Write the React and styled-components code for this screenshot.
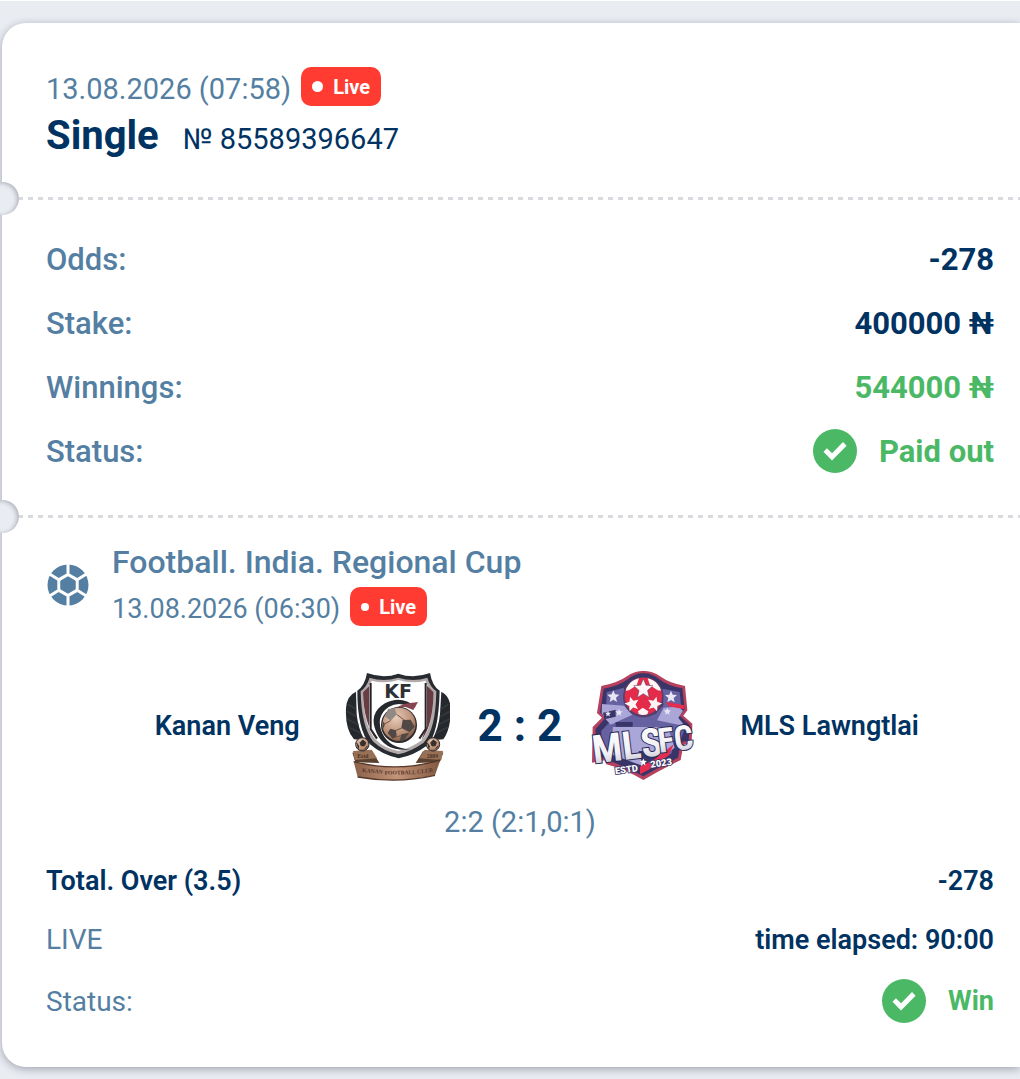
import React from "react";
import styled, { createGlobalStyle } from "styled-components";

const COLORS = {
  page: "#e9edf2",
  white: "#ffffff",
  navy: "#003262",
  blue: "#547fa2",
  green: "#4bb866",
  red: "#ff3b32",
  dash: "#d8dade",
};

const details = [
  { label: "Odds:", value: "-278" },
  { label: "Stake:", value: "400000 ₦" },
  { label: "Winnings:", value: "544000 ₦", green: true },
  { label: "Status:", value: "Paid out", green: true, check: true },
];

const CheckIcon = () => (
  <CheckSvg viewBox="0 0 44 44" aria-hidden="true">
    <circle cx="22" cy="22" r="22" fill={COLORS.green} />
    <path d="M10.5 22.8l3.4-3.5 5.2 5L30 13l3.6 3.7L19 31.4z" fill="#fff" />
  </CheckSvg>
);

const BallIcon = () => (
  <BallSvg viewBox="0 0 42 42" aria-hidden="true">
    <circle cx="21" cy="21" r="20.5" fill={COLORS.blue} />
    <path d="M21 12.8l7.2 4.1v8.2L21 29.2l-7.2-4.1v-8.2z" fill="none" stroke="#fff" strokeWidth="7" />
    <path d="M21 12.8l7.2 4.1v8.2L21 29.2l-7.2-4.1v-8.2z" fill={COLORS.blue} />
    <path d="M21 12.8l7.2 4.1v8.2L21 29.2l-7.2-4.1v-8.2z" fill="none" stroke={COLORS.blue} strokeWidth="1" />
    <path
      d="M21 0v9.5M21 32.5V42M31 15.2l8-4.9M31 26.8l8 4.9M11 15.2l-8-4.9M11 26.8l-8 4.9"
      fill="none"
      stroke="#fff"
      strokeWidth="3"
    />
  </BallSvg>
);

const KananLogo = () => (
  <Logo viewBox="30 30 330 330" role="img" aria-label="Kanan Veng crest">
    <defs>
      <linearGradient id="ribbon" x1="0" x2="1">
        <stop offset="0" stopColor="#8b6049" />
        <stop offset=".5" stopColor="#c49478" />
        <stop offset="1" stopColor="#80573f" />
      </linearGradient>
      <radialGradient id="leather" cx=".4" cy=".3" r=".8">
        <stop offset="0" stopColor="#e7cdbb" />
        <stop offset=".65" stopColor="#b98c73" />
        <stop offset="1" stopColor="#684536" />
      </radialGradient>
    </defs>
    <path
      d="M78 92Q50 104 48 142Q45 205 72 235L104 238Q84 202 80 160Z M334 92Q360 104 362 142Q363 205 340 235L306 238Q326 202 330 160Z"
      fill="#25292d"
    />
    <path
      d="M54 130l24 14M50 151l30 16M51 174l34 17M56 199l36 17M356 130l-24 14M360 151l-30 16M359 174l-34 17M354 199l-36 17"
      stroke="#34393d"
      strokeWidth="5"
    />
    <path
      d="M82 89Q104 75 111 36Q160 54 205 38Q251 54 300 36Q307 76 329 89Q326 218 292 253Q252 284 206 292Q157 282 120 250Q82 207 82 89Z"
      fill="#282b30"
    />
    <path
      d="M92 91Q111 76 119 50Q160 64 205 50Q250 64 292 50Q300 77 319 91Q317 207 281 245Q242 272 205 280Q160 270 130 242Q94 199 92 91Z"
      fill="#b2aaaa"
    />
    <path
      d="M99 94Q118 80 125 59Q165 70 205 57Q247 70 286 59Q292 80 311 94Q308 200 275 238Q242 262 205 270Q163 261 137 236Q101 194 99 94Z"
      fill="#fff"
    />
    <path d="M99 94l19-19v124l23 40Q101 189 99 94Z M291 74l20 20Q309 194 274 238l17-44Z" fill="#673d43" />
    <path d="M122 66v138l19 29M287 66v138l-19 29" fill="none" stroke="#252429" strokeWidth="6" />
    <Initials x="163" y="112" fill="#303136">
      KF
    </Initials>
    <path
      d="M257 137Q213 101 165 127Q113 158 140 216Q166 274 243 265Q180 263 158 219Q134 167 176 138Q208 120 239 139Z"
      fill="#25282d"
    />
    <path d="M225 128l39-5-14 24-23-9-31 2z" fill="#864550" />
    <circle cx="207" cy="192" r="54" fill="#29282a" />
    <circle cx="207" cy="190" r="50" fill="url(#leather)" />
    <g fill="#514845">
      <path d="M174 144l20-3 6 19-18 19-17-13z" fill="#918983" />
      <path d="M218 177l24-1 12 21-15 17-25-13z" />
      <path d="M181 203l17 5 2 20-12 5-15-17z" />
      <path d="M214 220l24-5-15 22-14 2z" />
      <path d="M157 179l8 9-5 16z" />
    </g>
    <path d="M182 179l-17 9M200 160l23 17M198 208l17-7M200 228l12-4" stroke="#765443" strokeWidth="3" />
    <path d="M67 275l60-4 21 35-72-2z M340 275l-61-4-22 35 72-2z" fill="#59402f" />
    <path d="M69 270l56-4 16 26-67 5z M339 270l-55-4-17 26 67 5z" fill="#987056" />
    <path d="M71 302Q205 336 331 297L315 343Q203 369 83 348Z" fill="url(#ribbon)" />
    <path d="M71 302Q205 336 331 297M83 348Q203 369 315 343" fill="none" stroke="#56382b" strokeWidth="4" />
    <ClubText x="96" y="333" fill="#54372d" transform="rotate(5 96 333)">
      KANAN
    </ClubText>
    <ClubText x="164" y="341" fill="#54372d" transform="rotate(-1 164 341)">
      FOOTBALL
    </ClubText>
    <ClubText x="262" y="338" fill="#54372d" transform="rotate(-7 262 338)">
      CLUB
    </ClubText>
    {[97, 309].map((x) => (
      <g key={x}>
        <circle cx={x} cy="250" r="20" fill="url(#leather)" stroke="#302a28" strokeWidth="3" />
        <path
          d={`M${x - 7} 245l8-8 9 7-3 10-10 1z M${x - 17} 246l6 9-2 9 M${x + 15} 255l-7 8`}
          fill="#39302e"
          stroke="#39302e"
          strokeWidth="3"
        />
      </g>
    ))}
    <ClubText x="82" y="290" fill="#493225">
      Estd
    </ClubText>
    <ClubText x="290" y="290" fill="#493225">
      2009
    </ClubText>
  </Logo>
);

const STAR = "M0-18L5-6 18-5 8 4 11 17 0 10-11 17-8 4-18-5-5-6Z";

const MlsLogo = () => (
  <Logo viewBox="30 30 330 330" role="img" aria-label="MLS Lawngtlai crest">
    <defs>
      <linearGradient id="silver" x1="0" y1="0" x2="0" y2="1">
        <stop offset="0" stopColor="#ffffff" />
        <stop offset=".6" stopColor="#f1f0f5" />
        <stop offset="1" stopColor="#b9b7c7" />
      </linearGradient>
    </defs>
    <path
      d="M64 75Q111 67 141 46Q165 29 190 30Q216 29 240 46Q271 68 315 75L322 148 310 164 337 188 335 246 310 252 302 297Q246 324 190 357Q133 324 79 310L73 298 36 305 38 198 66 170 51 156Z"
      fill="#b6405d"
    />
    <path
      d="M71 83Q118 75 144 54Q167 36 190 37Q214 36 237 54Q266 76 307 82L314 145 299 164 329 191 326 239 302 244 294 290Q243 315 190 346Q137 316 86 299L80 289 45 295 47 203 77 170 60 154Z"
      fill="#393568"
    />
    <path
      d="M80 94l52-14 4 49 35 33 55-3 24-26-3-50 52 10 5 48-25 28 36 31-11 31-22 7-7 39-81 47-93-40-38-5 1-70 34-35-20-21z"
      fill="#6661a0"
    />
    <path
      d="M66 129l66 5 25 27-65 30-18-20-9-15z M251 140l44-3 14 12-14 22 21 25-85-18z M99 198h165l20 62-89 68-103-42z"
      fill="#aaa6d8"
    />
    <path d="M69 155l38-9v21l-34 8zM107 183h51v14h-51zM176 270h74l-57 63zM81 288l102 49v-24l-86-32z" fill="#393568" />
    <path d="M258 122l55 11v12l-48-9zM222 296l59-46-14 33-61 43-26 14v-23z" fill="#e62d50" />
    <circle cx="190" cy="108" r="61" fill="#554069" />
    <circle cx="190" cy="106" r="56" fill="#e42b4a" />
    <g fill="#fff7f7">
      <path d="M146 71Q158 56 177 52l-7 21-23 15-10 1Q139 79 146 71Z" />
      <path d="M234 71Q222 56 203 52l7 21 23 15 10 1Q241 79 234 71Z" />
      <path d="M174 151l14-11 17 11-3 9Q188 164 176 159Z" />
      <path d={STAR} transform="translate(190 82) scale(1.6)" stroke="#554069" strokeWidth="1" />
      <path d={STAR} transform="translate(156 128) rotate(-15) scale(1.2)" />
      <path d={STAR} transform="translate(224 128) rotate(15) scale(1.2)" />
    </g>
    <g fill="#ebe6f6">
      <path d={STAR} transform="translate(100 106)" />
      <path d={STAR} transform="translate(273 107)" />
      <path d={STAR} transform="translate(84 158) scale(.5)" />
      <path d={STAR} transform="translate(117 154) scale(.6)" />
      <path d={STAR} transform="translate(262 151) scale(.6)" />
    </g>
    {/* the wordmark is lifted to the right, as on the club badge */}
    <g transform="rotate(-7 190 230)" stroke="#292855" strokeWidth="6" paintOrder="stroke">
      <Wordmark x="34" y="289" fill="url(#silver)" $size={118}>
        MLS
      </Wordmark>
      <Wordmark x="232" y="281" fill="url(#silver)" $size={102}>
        FC
      </Wordmark>
    </g>
    <g transform="rotate(-8 190 310)" stroke="#393568" strokeWidth="5" paintOrder="stroke">
      <FoundedText x="103" y="328" fill="#fff">
        ESTD
      </FoundedText>
      <FoundedText x="211" y="323" fill="#fff">
        2023
      </FoundedText>
    </g>
    <path d={STAR} transform="translate(190 303) scale(.6)" fill="#fff" />
  </Logo>
);

const LiveBadge = ({ small }) => (
  <Badge>
    <LiveDot $small={small} />
    Live
  </Badge>
);

const App = () => {
  return (
    <>
      <GlobalStyle />
      <Page>
        <Ticket>
          <TicketHeader>
            <MetaRow>
              <BetTime dateTime="2026-08-13T07:58">13.08.2026 (07:58)</BetTime>
              <LiveBadge />
            </MetaRow>
            <TitleRow>
              <BetType>Single</BetType>
              <BetNumber>№ 85589396647</BetNumber>
            </TitleRow>
          </TicketHeader>

          <Perforation />

          <Details>
            {details.map((item) => (
              <DetailRow key={item.label}>
                <DetailLabel>{item.label}</DetailLabel>
                <DetailValue $green={item.green}>
                  {item.check && <CheckIcon />}
                  {item.value}
                </DetailValue>
              </DetailRow>
            ))}
          </Details>

          <Perforation />

          <Event>
            <EventHeader>
              <BallIcon />
              <div>
                <League>Football. India. Regional Cup</League>
                <MetaRow>
                  <EventTime dateTime="2026-08-13T06:30">13.08.2026 (06:30)</EventTime>
                  <LiveBadge small />
                </MetaRow>
              </div>
            </EventHeader>

            <Match>
              <Team>
                Kanan Veng
                <KananLogo />
              </Team>
              <Score>2 : 2</Score>
              <Team>
                <MlsLogo />
                MLS Lawngtlai
              </Team>
            </Match>
            <Periods>2:2 (2:1,0:1)</Periods>

            <Outcome>
              <OutcomeRow>
                <OutcomeTerm $strong>Total. Over (3.5)</OutcomeTerm>
                <OutcomeValue>-278</OutcomeValue>
              </OutcomeRow>
              <OutcomeRow>
                <OutcomeTerm>LIVE</OutcomeTerm>
                <OutcomeValue>time elapsed: 90:00</OutcomeValue>
              </OutcomeRow>
              <OutcomeRow>
                <OutcomeTerm>Status:</OutcomeTerm>
                <OutcomeValue $green>
                  <CheckIcon />
                  Win
                </OutcomeValue>
              </OutcomeRow>
            </Outcome>
          </Event>
        </Ticket>
      </Page>
    </>
  );
};

export default App;

const GlobalStyle = createGlobalStyle`
  * {
    box-sizing: border-box;
  }

  body {
    margin: 0;
    background: ${COLORS.page};
    color: ${COLORS.navy};
    font-family: Roboto, "Noto Sans", sans-serif;
  }

  h1, h2, p, dl, dd {
    margin: 0;
  }
`;

const Page = styled.main`
  border-top: 1px solid ${COLORS.white};
  padding: 22px 0 12px 2px;
  overflow: hidden;
`;

const Ticket = styled.article`
  background: ${COLORS.white};
  border-radius: 24px 0 0 24px;
  box-shadow: 0 2px 8px rgba(50, 50, 70, 0.4);
`;

const TicketHeader = styled.header`
  padding: 44px 26px 36px 44px;
`;

const MetaRow = styled.div`
  display: flex;
  align-items: flex-start;
  gap: 10px;
`;

const BetTime = styled.time`
  color: ${COLORS.blue};
  font-size: 29px;
  line-height: 44px;
`;

const EventTime = styled.time`
  color: ${COLORS.blue};
  font-size: 27px;
  line-height: 44px;
`;

const Badge = styled.span`
  display: inline-flex;
  align-items: center;
  gap: 10px;
  height: 39px;
  padding: 0 11px;
  border-radius: 10px;
  background: ${COLORS.red};
  color: ${COLORS.white};
  font-size: 20px;
  font-weight: 700;
`;

const LiveDot = styled.span`
  width: ${(props) => (props.$small ? "8px" : "11px")};
  height: ${(props) => (props.$small ? "8px" : "11px")};
  border-radius: 50%;
  background: ${COLORS.white};
`;

const TitleRow = styled.div`
  display: flex;
  align-items: baseline;
  gap: 24px;
`;

const BetType = styled.h1`
  font-size: 40px;
  font-weight: 700;
  line-height: 50px;
`;

const BetNumber = styled.span`
  font-size: 29px;
`;

const Perforation = styled.div`
  position: relative;
  height: 3px;
  margin-left: 16px;
  background: repeating-linear-gradient(
    90deg,
    ${COLORS.dash} 0 5px,
    transparent 5px 10px
  );

  /* half-round cut on the edge of the ticket */
  &::before {
    content: "";
    position: absolute;
    left: -32px;
    top: -15px;
    width: 33px;
    height: 33px;
    border-radius: 50%;
    background: ${COLORS.page};
    box-shadow: inset -2px 1px 4px rgba(50, 50, 70, 0.3);
  }
`;

const Details = styled.dl`
  padding: 27px 26px 32px 44px;
`;

const DetailRow = styled.div`
  display: flex;
  align-items: center;
  justify-content: space-between;
  height: 64px;
`;

const DetailLabel = styled.dt`
  color: ${COLORS.blue};
  font-size: 31px;
  font-weight: 500;
`;

const DetailValue = styled.dd`
  display: flex;
  align-items: center;
  gap: 22px;
  color: ${(props) => (props.$green ? COLORS.green : COLORS.navy)};
  font-size: 31px;
  font-weight: 700;
`;

const CheckSvg = styled.svg`
  width: 44px;
  height: 44px;
`;

const Event = styled.section`
  padding: 21px 26px 34px 44px;
`;

const EventHeader = styled.header`
  display: flex;
  align-items: center;
  gap: 23px;
`;

const BallSvg = styled.svg`
  width: 42px;
  height: 42px;
  margin-left: 1px;
`;

const League = styled.h2`
  margin-bottom: 2px;
  color: ${COLORS.blue};
  font-size: 32px;
  font-weight: 500;
  line-height: 46px;
`;

const Match = styled.div`
  display: grid;
  grid-template-columns: 1fr auto 1fr;
  align-items: center;
  gap: 28px;
  margin-top: 40px;
`;

const Team = styled.div`
  display: flex;
  align-items: center;
  gap: 40px;
  font-size: 27px;
  font-weight: 600;

  &:first-child {
    justify-content: flex-end;
  }
`;

const Logo = styled.svg`
  flex-shrink: 0;
  width: 110px;
  height: 110px;
`;

const Initials = styled.text`
  font-family: "DejaVu Sans", sans-serif;
  font-size: 57px;
  font-weight: 700;
`;

const ClubText = styled.text`
  font-family: "Liberation Serif", serif;
  font-size: 17px;
  font-weight: 700;
`;

const Wordmark = styled.text`
  font-family: "Liberation Sans Narrow", "Roboto Condensed", sans-serif;
  font-size: ${(props) => props.$size}px;
  font-weight: 700;
`;

const FoundedText = styled.text`
  font-family: Roboto, sans-serif;
  font-size: 28px;
  font-weight: 900;
`;

const Score = styled.strong`
  font-size: 44px;
  font-weight: 700;
  line-height: 52px;
`;

const Periods = styled.p`
  margin-top: 21px;
  color: ${COLORS.blue};
  font-size: 29px;
  line-height: 40px;
  text-align: center;
`;

const Outcome = styled.dl`
  margin-top: 9px;
`;

const OutcomeRow = styled.div`
  display: flex;
  align-items: center;
  justify-content: space-between;
  min-height: 59px;

  &:last-child {
    min-height: 64px;
  }
`;

const OutcomeTerm = styled.dt`
  color: ${(props) => (props.$strong ? COLORS.navy : COLORS.blue)};
  font-size: ${(props) => (props.$strong ? "27px" : "28px")};
  font-weight: ${(props) => (props.$strong ? 600 : 400)};
`;

const OutcomeValue = styled.dd`
  display: flex;
  align-items: center;
  gap: 22px;
  color: ${(props) => (props.$green ? COLORS.green : COLORS.navy)};
  font-size: 27px;
  font-weight: ${(props) => (props.$green ? 700 : 600)};
`;
